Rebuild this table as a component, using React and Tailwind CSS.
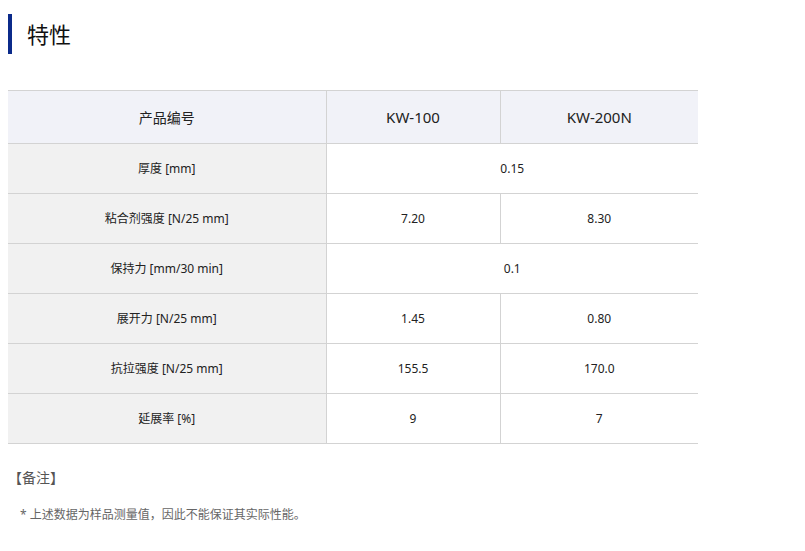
const rows = [
  { label: '厚度 [mm]', values: ['0.15'] },
  { label: '粘合剂强度 [N/25 mm]', values: ['7.20', '8.30'] },
  { label: '保持力 [mm/30 min]', values: ['0.1'] },
  { label: '展开力 [N/25 mm]', values: ['1.45', '0.80'] },
  { label: '抗拉强度 [N/25 mm]', values: ['155.5', '170.0'] },
  { label: '延展率 [%]', values: ['9', '7'] },
];

export default function App() {
  return (
    <div
      className="min-h-[551px] bg-white pl-2 text-[#222]"
      style={{ fontFamily: '"Noto Sans", "Noto Sans CJK SC", sans-serif' }}
    >
      {/* Title */}
      <div className="pt-[14px]">
        <div className="flex h-10 items-center border-l-4 border-[#0b2a8a] pl-[15px]">
          <h2 className="text-[22px] leading-none text-[#111]">特性</h2>
        </div>
      </div>

      {/* Spec table */}
      <table className="mt-9 w-[690px] table-fixed border-collapse border-t border-[#d3d3d3]">
        <colgroup>
          <col className="w-[318px]" />
          <col className="w-[174px]" />
          <col className="w-[198px]" />
        </colgroup>
        <thead>
          <tr className="h-[53px] border-b border-[#d3d3d3] bg-[#f1f2f8]">
            <th className="border-r border-[#d3d3d3] text-[14px] font-normal">产品编号</th>
            <th className="border-r border-[#d3d3d3] text-[15px] font-normal">KW-100</th>
            <th className="text-[15px] font-normal">KW-200N</th>
          </tr>
        </thead>
        <tbody>
          {rows.map((row) => (
            <tr key={row.label} className="h-[50px] border-b border-[#d3d3d3] text-[12px]">
              <td className="border-r border-[#d3d3d3] bg-[#f1f1f1] text-center">{row.label}</td>
              {row.values.length === 1 ? (
                <td colSpan={2} className="text-center">{row.values[0]}</td>
              ) : (
                <>
                  <td className="border-r border-[#d3d3d3] text-center">{row.values[0]}</td>
                  <td className="text-center">{row.values[1]}</td>
                </>
              )}
            </tr>
          ))}
        </tbody>
      </table>

      {/* Notes */}
      <p className="mt-6 text-[14px] leading-5 text-[#555]">【备注】</p>
      <p className="mt-[18px] pl-3 text-[12px] leading-[18px] text-[#666]">
        * 上述数据为样品测量值，因此不能保证其实际性能。
      </p>
    </div>
  );
}
